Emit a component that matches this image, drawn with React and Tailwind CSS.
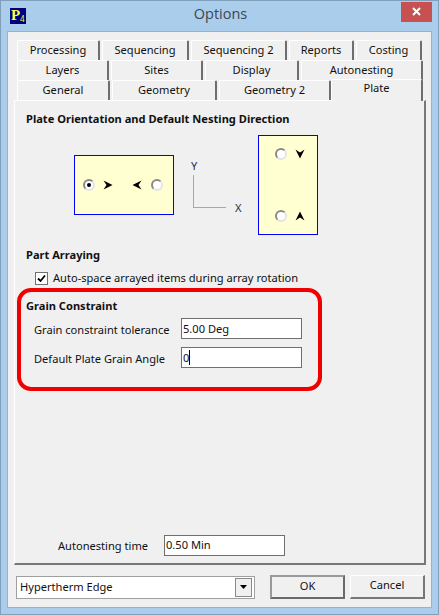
const font = { fontFamily: '"Noto Sans", sans-serif' };

function Tab({ w, label }) {
  return (
    <div className={`h-[20px] flex items-center justify-center pb-[1px] text-[11.1px] text-[#111] bg-[#f0f0f0] border-t border-l border-white border-r-2 border-r-[#6e6e6e] rounded-t-[2px] shrink-0 ${w}`}>
      {label}
    </div>
  );
}

function Radio({ checked }) {
  return (
    <span className="w-[12px] h-[12px] rounded-full bg-white border-2 border-[#8a8a8a] border-r-[#e4e4e4] border-b-[#e4e4e4] flex items-center justify-center shrink-0">
      {checked && <span className="w-[4px] h-[4px] rounded-full bg-black" />}
    </span>
  );
}

function Arrow({ rot }) {
  return (
    <svg width="10" height="10" viewBox="0 0 10 10" style={{ transform: `rotate(${rot}deg)` }} className="shrink-0">
      <path d="M0.5 0.5 L9.5 5 L0.5 9.5 L3.5 5 Z" fill="#000" />
    </svg>
  );
}

function Field({ label, value, caret }) {
  return (
    <div className="flex items-center">
      <span className="text-[11.1px] text-[#111] w-[147px] pt-[3px]">{label}</span>
      <div className="w-[121px] h-[21px] bg-white border border-[#6f6f6f] text-[11.1px] text-[#111] pl-[1px] flex items-center leading-none">
        {value}
        {caret && <span className="w-px h-[15px] bg-black" />}
      </div>
    </div>
  );
}

export default function App() {
  return (
    <div style={font} className="w-[439px] h-[615px] bg-[#aacdeb] border border-[#7f9fba] flex flex-col overflow-hidden">
      <div className="h-[30px] flex items-center shrink-0 pl-[9px] relative">
        <div className="w-[16px] h-[16px] bg-[#00007f] relative overflow-hidden shrink-0">
          <span className="absolute left-[1px] top-[-2px] text-[15px] font-bold text-[#ffff40] leading-[18px]" style={{ fontFamily: '"Liberation Serif", serif' }}>P</span>
          <span className="absolute left-[10px] top-[6px] text-[8px] text-[#ffff40] leading-[10px]">4</span>
        </div>
        <div className="flex-1 text-center text-[14.5px] text-[#3b4652] pl-[14px] mt-[-4px]" style={{ fontFamily: '"Open Sans", sans-serif' }}>Options</div>
        <div className="w-[31px] h-[20px] bg-[#c75050] mr-[6px] mt-[-9px] flex items-center justify-center shrink-0">
          <svg width="9" height="9" viewBox="0 0 9 9"><path d="M1 1 L8 8 M8 1 L1 8" stroke="#fff" strokeWidth="2" /></svg>
        </div>
      </div>

      <div className="mx-[6px] h-[577px] bg-[#f0f0f0] border border-[#9ab2c6] flex flex-col pt-[8px] pl-[6px] pr-[6px]">
        <div className="flex pl-[3px] gap-[2px]">
          <Tab w="w-[83px]" label="Processing" />
          <Tab w="w-[87px]" label="Sequencing" />
          <Tab w="w-[96px]" label="Sequencing 2" />
          <Tab w="w-[65px]" label="Reports" />
          <Tab w="w-[66px]" label="Costing" />
        </div>
        <div className="flex pl-[3px] gap-[2px]">
          <Tab w="w-[92px]" label="Layers" />
          <Tab w="w-[92px]" label="Sites" />
          <Tab w="w-[94px]" label="Display" />
          <Tab w="w-[122px]" label="Autonesting" />
        </div>
        <div className="flex pl-[3px] gap-[2px] relative z-10 h-[20px] items-end">
          <Tab w="w-[93px]" label="General" />
          <Tab w="w-[105px]" label="Geometry" />
          <Tab w="w-[112px]" label="Geometry 2" />
          <div className="w-[92px] ml-[-2px] h-[22px] mb-[-1px] bg-[#f0f0f0] border-t border-l border-white border-r-2 border-r-[#6e6e6e] rounded-t-[2px] text-[11.1px] text-[#111] flex items-start justify-center">Plate</div>
        </div>

        <div className="w-[412px] h-[465px] bg-[#f0f0f0] border-t border-l border-white border-r-2 border-r-[#777] border-b-2 border-b-[#777] flex flex-col pt-[9px] pl-[12px]">
          <div className="text-[11.1px] font-bold text-[#111] leading-[18px] ml-[-1px]">Plate Orientation and Default Nesting Direction</div>

          <div className="flex mt-[7px]">
            <div className="w-[100px] h-[60px] mt-[20px] ml-[47px] bg-[#ffffd2] border border-[#0000ff] flex items-center pl-[8px]">
              <Radio checked />
              <span className="ml-[8px]"><Arrow rot={0} /></span>
              <span className="ml-[19px]"><Arrow rot={180} /></span>
              <span className="ml-[9px]"><Radio /></span>
            </div>
            <div className="w-[68px] ml-[17px] mt-[20px] h-[60px] relative">
              <span className="absolute left-[0px] top-[4px] text-[11.1px] text-[#234] leading-[14px]">Y</span>
              <div className="absolute left-[2px] top-[20px] w-[33px] h-[33px] border-l border-b border-[#a8a8a8]" />
              <span className="absolute left-[44px] top-[46px] text-[11.1px] text-[#234] leading-[14px]">X</span>
            </div>
            <div className="w-[60px] h-[100px] ml-[-1px] bg-[#ffffd2] border border-[#0000ff] flex flex-col justify-between pl-[16px] py-[12px]">
              <div className="flex items-center gap-[8px]"><Radio /><Arrow rot={90} /></div>
              <div className="flex items-center gap-[8px]"><Radio /><Arrow rot={-90} /></div>
            </div>
          </div>

          <div className="text-[11.1px] font-bold text-[#111] leading-[18px] mt-[11px] ml-[-1px]">Part Arraying</div>
          <div className="flex items-center mt-[5px] ml-[8px] h-[18px]">
            <span className="w-[13px] h-[13px] bg-white border border-[#707070] flex items-center justify-center shrink-0">
              <svg width="9" height="9" viewBox="0 0 9 9"><path d="M1 4.5 L3.5 7 L8 1.5" fill="none" stroke="#000" strokeWidth="1.8" /></svg>
            </span>
            <span className="ml-[5px] text-[11.1px] text-[#111]">Auto-space arrayed items during array rotation</span>
          </div>

          <div className="w-[305px] h-[103px] ml-[-10px] mt-[1px] border-[4px] border-[#f00000] rounded-[14px] flex flex-col pl-[5px] pt-[5px] shrink-0">
            <div className="text-[11.1px] font-bold text-[#111] leading-[18px]">Grain Constraint</div>
            <div className="flex flex-col gap-[8px] mt-[3px] ml-[8px]">
              <Field label="Grain constraint tolerance" value="5.00 Deg" />
              <Field label="Default Plate Grain Angle" value="0" caret />
            </div>
          </div>

          <div className="flex items-center mt-auto mb-[7px] ml-[31px]">
            <span className="text-[11.1px] text-[#111] w-[106px] pt-[2px]">Autonesting time</span>
            <div className="w-[121px] h-[21px] bg-white border border-[#6f6f6f] text-[11.1px] text-[#111] pl-[1px] flex items-center">0.50 Min</div>
          </div>
        </div>

        <div className="flex items-center mt-[10px] pl-[2px]">
          <div className="w-[239px] h-[23px] bg-white border border-[#a0a0a0] flex items-center justify-between pl-[3px] pr-[2px] text-[11.1px] text-[#111]">
            Hypertherm Edge
            <span className="w-[17px] h-[19px] bg-[#f0f0f0] border border-[#8a8a8a] flex items-center justify-center">
              <svg width="7" height="4" viewBox="0 0 7 4"><path d="M0 0 H7 L3.5 4 Z" fill="#000" /></svg>
            </span>
          </div>
          <div className="w-[75px] h-[24px] ml-[15px] pb-[2px] bg-[#f0f0f0] border-2 border-[#6a6a6a] border-t-[#999] border-l-[#999] text-[11.1px] text-[#111] flex items-center justify-center">OK</div>
          <div className="w-[75px] h-[24px] ml-[5px] pb-[2px] bg-[#f0f0f0] border border-t-white border-l-white border-r-2 border-b-2 border-r-[#777] border-b-[#777] text-[11.1px] text-[#111] flex items-center justify-center">Cancel</div>
        </div>
      </div>
    </div>
  );
}
